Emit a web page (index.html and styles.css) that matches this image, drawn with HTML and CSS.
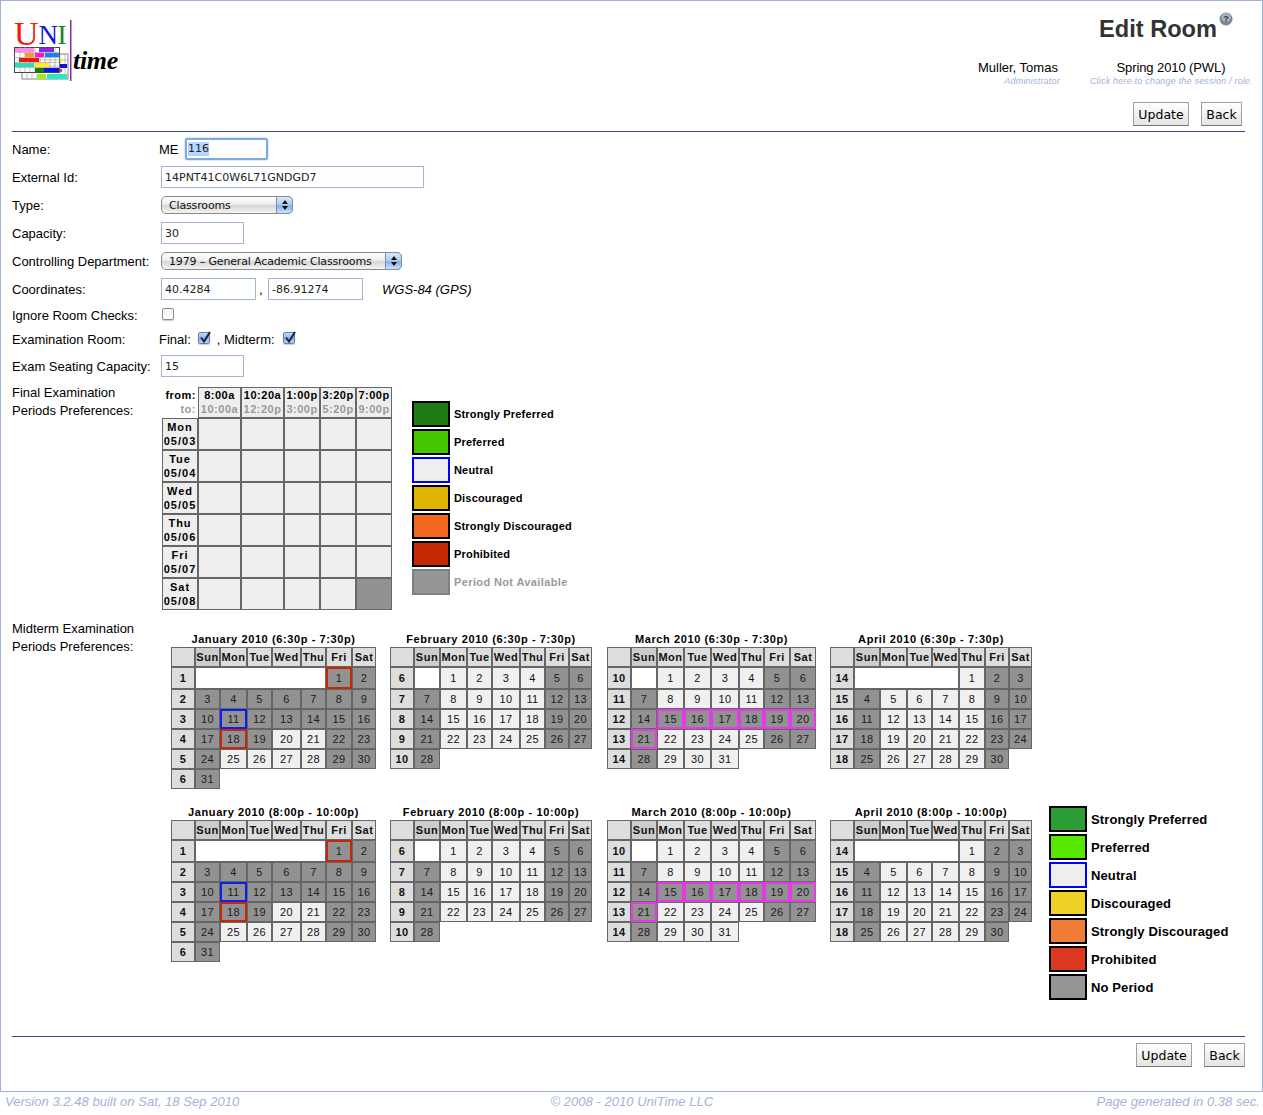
FILE: index.html
```html
<!DOCTYPE html>
<html lang="en">
<head>
<meta charset="utf-8">
<title>Edit Room</title>
<link rel="stylesheet" href="styles.css">
</head>
<body>
<div class="frame">
  <header class="header">
    <svg class="logo" width="110" height="74" viewBox="0 0 110 74" aria-label="UniTime logo">
      <g transform="translate(-14 -9)">
        <text class="logo-u" x="14" y="45" fill="#f01810">U</text>
        <text class="logo-u logo-n" x="38.5" y="44" fill="#1414e6">N</text>
        <text class="logo-u logo-n" x="57.5" y="44" fill="#20802a">I</text>
        <rect x="70" y="20" width="1.5" height="61" fill="#8a2aa8"/>
        <rect x="22" y="54" width="46" height="25" fill="#fff" stroke="#666" stroke-width=".8"/>
        <rect x="14.5" y="47.5" width="45" height="25" fill="#fff" stroke="#444"/>
        <path d="M14 52.5h46M14 57.5h46M14 62.5h46M14 67.5h46M20 47v25M25 47v25M30 47v25M35 47v25M40 47v25M45 47v25M50 47v25M55 47v25M60 54v25M65 54v25M27 72v7M32 72v7M37 72v7M22 60h46M22 66h46" stroke="#999" stroke-width=".6" fill="none"/>
        <rect x="15" y="48" width="19" height="4" fill="#ff8ae8"/>
        <rect x="39" y="48" width="15" height="4" fill="#8a28e0"/>
        <rect x="25" y="53" width="9" height="4" fill="#ff9428"/>
        <rect x="35" y="53" width="9" height="4" fill="#f018d8"/>
        <rect x="45" y="53" width="14" height="4" fill="#1088f0"/>
        <rect x="19" y="58" width="20" height="4" fill="#f01808"/>
        <rect x="15" y="63" width="19" height="4" fill="#28e0b8"/>
        <rect x="35" y="63" width="14" height="4" fill="#ffee10"/>
        <rect x="60" y="59" width="2" height="4" fill="#ffee10"/>
        <rect x="35" y="68" width="9" height="4" fill="#108010"/>
        <rect x="44" y="68" width="15" height="4" fill="#1010e0"/>
        <rect x="60" y="64" width="7" height="4" fill="#1010e0"/>
        <rect x="60" y="69" width="2" height="3" fill="#f018d8"/>
        <rect x="37" y="74" width="9" height="5" fill="#98f020"/>
        <rect x="47" y="74" width="20" height="5" fill="#28e8c0"/>
        <text class="logo-time" x="73" y="69">time</text>
      </g>
    </svg>
    <div class="header-right">
      <div class="title-row">
        <h1 class="title">Edit Room</h1>
        <svg class="help" width="14" height="14" viewBox="0 0 14 14" aria-label="Help">
          <circle cx="7" cy="7" r="6.5" fill="#7b8794"/>
          <circle cx="7" cy="5.5" r="4.6" fill="#aab3bd"/>
          <text class="help-q" x="7" y="10" text-anchor="middle">?</text>
        </svg>
      </div>
      <div class="user-row">
        <div class="user">
          <div class="user-name">Muller, Tomas</div>
          <div class="hint">Administrator</div>
        </div>
        <div class="session">
          <div class="user-name">Spring 2010 (PWL)</div>
          <div class="hint">Click here to change the session / role.</div>
        </div>
      </div>
    </div>
  </header>

  <main class="content">
    <div class="actions actions-top">
      <button class="btn" type="button">Update</button>
      <button class="btn" type="button">Back</button>
    </div>
    <div class="rule"></div>

    <div class="form">
      <div class="row">
        <label class="lbl">Name:</label>
        <div class="val">
          <span class="prefix">ME</span>
          <span class="focus-input"><span class="selected">116</span></span>
        </div>
      </div>
      <div class="row">
        <label class="lbl">External Id:</label>
        <div class="val val-in"><input class="input input-xl" type="text" value="14PNT41C0W6L71GNDGD7"></div>
      </div>
      <div class="row">
        <label class="lbl">Type:</label>
        <div class="val val-in">
          <span class="select select-type">Classrooms
            <span class="arrows"><svg width="8" height="12" viewBox="0 0 8 12"><path d="M4 1 7 5H1zM4 11 1 7h6z" fill="#111"/></svg></span>
          </span>
        </div>
      </div>
      <div class="row">
        <label class="lbl">Capacity:</label>
        <div class="val val-in"><input class="input input-sm" type="text" value="30"></div>
      </div>
      <div class="row">
        <label class="lbl">Controlling Department:</label>
        <div class="val val-in">
          <span class="select select-dept">1979 – General Academic Classrooms
            <span class="arrows"><svg width="8" height="12" viewBox="0 0 8 12"><path d="M4 1 7 5H1zM4 11 1 7h6z" fill="#111"/></svg></span>
          </span>
        </div>
      </div>
      <div class="row">
        <label class="lbl">Coordinates:</label>
        <div class="val val-in">
          <input class="input input-md" type="text" value="40.4284">
          <span class="comma">,</span>
          <input class="input input-md" type="text" value="-86.91274">
          <span class="wgs">WGS-84 (GPS)</span>
        </div>
      </div>
      <div class="row row-ignore">
        <label class="lbl">Ignore Room Checks:</label>
        <div class="val val-in"><span class="check check-off"></span></div>
      </div>
      <div class="row row-exam">
        <label class="lbl">Examination Room:</label>
        <div class="val">
          <span>Final:</span>
          <span class="check check-on"><svg width="14" height="14" viewBox="0 0 14 14"><path d="M3 6.5 6 10.5 12 1" fill="none" stroke="#12264a" stroke-width="2"/></svg></span>
          <span class="midterm-word">, Midterm:</span>
          <span class="check check-on"><svg width="14" height="14" viewBox="0 0 14 14"><path d="M3 6.5 6 10.5 12 1" fill="none" stroke="#12264a" stroke-width="2"/></svg></span>
        </div>
      </div>
      <div class="row row-seat">
        <label class="lbl">Exam Seating Capacity:</label>
        <div class="val val-in"><input class="input input-sm" type="text" value="15"></div>
      </div>
    </div>

    <section class="final">
      <div class="lbl lbl-block">Final Examination<br>Periods Preferences:</div>
      <table class="exam">
        <colgroup><col class="c-corner"><col class="c-w43"><col class="c-w43"><col class="c-w36"><col class="c-w36"><col class="c-w36"></colgroup>
        <thead>
          <tr>
            <th class="corner">from:<br><span class="to">to:</span></th>
            <th>8:00a<br><span class="to">10:00a</span></th>
            <th>10:20a<br><span class="to">12:20p</span></th>
            <th>1:00p<br><span class="to">3:00p</span></th>
            <th>3:20p<br><span class="to">5:20p</span></th>
            <th>7:00p<br><span class="to">9:00p</span></th>
          </tr>
        </thead>
        <tbody>
          <tr><th>Mon<br>05/03</th><td></td><td></td><td></td><td></td><td></td></tr>
          <tr><th>Tue<br>05/04</th><td></td><td></td><td></td><td></td><td></td></tr>
          <tr><th>Wed<br>05/05</th><td></td><td></td><td></td><td></td><td></td></tr>
          <tr><th>Thu<br>05/06</th><td></td><td></td><td></td><td></td><td></td></tr>
          <tr><th>Fri<br>05/07</th><td></td><td></td><td></td><td></td><td></td></tr>
          <tr><th>Sat<br>05/08</th><td></td><td></td><td></td><td></td><td class="na"></td></tr>
        </tbody>
      </table>
      <ul class="legend legend-final">
        <li><span class="sw sf1"></span>Strongly Preferred</li>
        <li><span class="sw sf2"></span>Preferred</li>
        <li><span class="sw neutral"></span>Neutral</li>
        <li><span class="sw sf4"></span>Discouraged</li>
        <li><span class="sw sf5"></span>Strongly Discouraged</li>
        <li><span class="sw sf6"></span>Prohibited</li>
        <li class="muted"><span class="sw sf7"></span>Period Not Available</li>
      </ul>
    </section>

    <section class="midterm">
      <div class="lbl lbl-block">Midterm Examination<br>Periods Preferences:</div>
      <div class="cal-blocks">
        <div class="cal-row" data-time="6:30p - 7:30p"></div>
        <div class="cal-row cal-row-2" data-time="8:00p - 10:00p">
          <ul class="legend legend-mid">
            <li><span class="sw sm1"></span>Strongly Preferred</li>
            <li><span class="sw sm2"></span>Preferred</li>
            <li><span class="sw neutral"></span>Neutral</li>
            <li><span class="sw sm4"></span>Discouraged</li>
            <li><span class="sw sm5"></span>Strongly Discouraged</li>
            <li><span class="sw sm6"></span>Prohibited</li>
            <li><span class="sw sm7"></span>No Period</li>
          </ul>
        </div>
      </div>
    </section>

    <div class="rule rule-bottom"></div>
    <div class="actions actions-bottom">
      <button class="btn" type="button">Update</button>
      <button class="btn" type="button">Back</button>
    </div>
  </main>
</div>
<footer class="footer">
  <span>Version 3.2.48 built on Sat, 18 Sep 2010</span>
  <span class="foot-mid">© 2008 - 2010 UniTime LLC</span>
  <span>Page generated in 0.38 sec.</span>
</footer>
<script src="calendar.js"></script>
</body>
</html>
```
FILE: styles.css
```css
* { box-sizing: border-box; }
html, body { margin: 0; padding: 0; }
body { font-family: "Liberation Sans", Arial, sans-serif; font-size: 13px; color: #000; background: #fff; }

.frame { width: 1263px; height: 1092px; border: 1px solid #9fb2d6; position: relative; }

/* header */
.header { display: flex; justify-content: space-between; height: 100px; padding: 8px 9px 0 13px; }
.logo { display: block; }
.logo-u { font-family: "Liberation Serif", serif; font-size: 34px; }
.logo-n { font-size: 27px; }
.logo-time { font-family: "Liberation Serif", serif; font-weight: bold; font-style: italic; font-size: 26px; letter-spacing: -.3px; }
.header-right { display: flex; flex-direction: column; align-items: flex-end; margin-top: 4px; }
.title-row { display: flex; align-items: flex-start; padding-right: 20px; height: 42px; }
.title { margin: 0; font-size: 23.6px; line-height: 30px; padding-top: 1px; font-weight: bold; color: #333; }
.help { margin: -1px 0 0 2px; }
.help-q { font: bold 9px "Liberation Sans", sans-serif; fill: #2d3a48; }
.user-row { display: flex; gap: 30px; margin-top: 5px; }
.user { text-align: right; }
.session { text-align: center; }
.user-name { font-size: 13px; line-height: 16px; }
.user .user-name { padding-right: 2px; }
.session .user-name { letter-spacing: -.1px; padding-right: 1px; }
.hint { font-size: 9px; line-height: 11px; font-style: italic; color: #9fb2d6; letter-spacing: .2px; }

/* content */
.content { padding: 0 17px 0 11px; }
.actions { display: flex; justify-content: flex-end; gap: 12px; }
.actions-top { padding: 1px 3px 0 0; height: 30px; }
.btn { font-family: "DejaVu Sans", sans-serif; font-size: 12.5px; height: 24px; padding: 0; border: 1px solid #a0a0a0; border-bottom-color: #777; background: linear-gradient(#fff, #e4e4e4); color: #000; width: 56px; border-radius: 0; }
.btn + .btn { width: 41px; }
.rule { height: 1px; background: #35506e; }

/* form */
.form { display: flex; flex-direction: column; padding-top: 3px; }
.row { display: flex; align-items: center; height: 28px; }
.row-ignore { height: 24px; }
.row-exam { height: 24px; }
.row-seat { height: 30px; }
.lbl { width: 147px; flex: none; font-size: 13px; line-height: 18px; }
.row .lbl { padding-top: 1px; }
.val { display: flex; align-items: center; font-size: 13px; }
.val-in { padding-left: 2px; }
.prefix { font-size: 13px; width: 26px; }
.input { height: 22px; border: 1px solid #a2b6d3; padding: 0 3px; font-family: "DejaVu Sans", sans-serif; font-size: 11px; color: #222; background: #fff; outline: none; }
.input-xl { width: 263px; }
.input-sm { width: 83px; }
.input-md { width: 95px; }
.focus-input { display: flex; align-items: center; width: 83px; height: 22px; padding: 0 1px; border: 2px solid #7fa8dc; border-radius: 2px; box-shadow: 0 0 2px #8ab4e8; font-family: "DejaVu Sans", sans-serif; font-size: 11px; color: #222; }
.selected { background: #b5d5ff; line-height: 14px; }
.select { position: relative; display: flex; align-items: center; height: 18px; padding-left: 7px; font-family: "DejaVu Sans", sans-serif; font-size: 11px; letter-spacing: -.15px; color: #111; border: 1px solid #8a8a8a; border-radius: 5px; background: linear-gradient(#fff, #eee 45%, #d6d6d6 55%, #f4f4f4); }
.select-type { width: 132px; }
.select-dept { width: 241px; }
.arrows { position: absolute; right: -1px; top: -1px; bottom: -1px; width: 17px; display: flex; align-items: center; justify-content: center; border-radius: 0 5px 5px 0; border: 1px solid #7f8ea4; background: linear-gradient(#dce9f8, #a9c9ee 50%, #7fb0ea 55%, #cfe2f8); }
.comma { width: 12px; text-align: left; padding-left: 3px; }
.wgs { font-style: italic; margin-left: 19px; }
.check { display: block; position: relative; width: 12px; height: 12px; border: 1px solid #8c8c8c; border-radius: 2px; background: linear-gradient(#f4f4f4, #fff); box-shadow: 0 1px 1px #ccc; margin-bottom: 2px; }
.check-off { margin-left: 1px; }
.check-on { background: linear-gradient(#c4d8f2, #8cb2e4 55%, #bcd6f4); border-color: #6b7f9e; margin-left: 7px; margin-bottom: 2px; }
.check-on svg { position: absolute; left: -1px; top: -2px; }
.midterm-word { margin-left: 7px; }
.midterm-word + .check-on { margin-left: 8px; }

/* final exam */
.final { display: flex; align-items: flex-start; margin-top: 6px; position: relative; }
.final > .lbl { width: 150px; margin-top: -3px; }
.exam { border-collapse: separate; border-spacing: 0; table-layout: fixed; width: 230px; font-size: 11px; letter-spacing: .6px; }
.c-corner { width: 36px; }
.c-w43 { width: 43px; }
.c-w36 { width: 36px; }
.exam th, .exam td { border: 1px solid #666; padding: 0; text-align: center; font-weight: bold; background: #eee; line-height: 14px; }
.exam thead th { height: 31px; vertical-align: top; letter-spacing: .5px; }
.exam tbody th { height: 32px; line-height: 14px; letter-spacing: 1px; }
.exam .corner { border: 0; background: #fff; text-align: right; padding: 1px 2px 0 0; }
.exam .to { color: #999; }
.exam td.na { background: #929292; }
.legend { list-style: none; margin: 0; padding: 0; font-weight: bold; }
.legend li { display: flex; align-items: center; height: 28px; }
.sw { display: block; width: 38px; height: 26px; margin-right: 4px; border: 2px solid #000; flex: none; }
.legend-final { margin: 13px 0 0 20px; font-size: 11px; letter-spacing: .18px; }
.muted { color: #999; letter-spacing: .38px; }
.neutral { background: #eee; border-color: #00f; }
.sf1 { background: #1f7c13; }
.sf2 { background: #45c700; }
.sf4 { background: #dfb400; }
.sf5 { background: #f0681d; }
.sf6 { background: #c42805; }
.sf7 { background: #959595; border-color: #808080; }
.sm1 { background: #2c9c35; }
.sm2 { background: #57e800; }
.sm4 { background: #f0d128; }
.sm5 { background: #f07c36; }
.sm6 { background: #da3820; }
.sm7 { background: #959595; }

/* midterm */
.midterm { display: flex; align-items: flex-start; margin-top: 8px; }
.midterm > .lbl { width: 159px; flex: none; margin-top: 2px; }
.cal-blocks { display: flex; flex-direction: column; }
.cal-row { display: flex; align-items: flex-start; gap: 14px; height: 187px; padding-top: 14px; }
.cal-row-2 { padding-top: 0; height: 170px; }
.cal-title { text-align: center; font-size: 11px; font-weight: bold; line-height: 15px; letter-spacing: .6px; white-space: nowrap; }
.cal-mar { margin-left: 1px; }
.cal { border-collapse: separate; border-spacing: 0; table-layout: fixed; font-size: 11px; letter-spacing: .3px; color: #111; }
.cal th, .cal td { border: 1px solid #666; padding: 0; text-align: center; height: 20px; }
.cal thead th { background: #ddd; font-weight: bold; letter-spacing: .5px; }
.cal thead th.sun { background: #ccc; }
.cal tbody th { background: #ddd; font-weight: bold; }
.cal tbody tr:first-child th, .cal tbody tr:first-child td { height: 22px; }
.cal td.light { background: #f0f0f0; }
.cal td.gray { background: #929292; color: #1c1c1c; }
.cal td.white { background: #fff; }
.cal td.none { border: 0; background: transparent; }
.cal td.red { border-color: #c42805; box-shadow: inset 0 0 0 1px #c42805; }
.cal td.blue { border-color: #0a1ef0; box-shadow: inset 0 0 0 1px #0a1ef0; }
.cal td.mag { border-color: #e53be5; box-shadow: inset 0 0 0 1px #e53be5; }
.legend-mid { margin: 0 0 0 3px; font-size: 13px; letter-spacing: .12px; }

.rule-bottom { position: absolute; left: 11px; right: 17px; top: 1035px; }
.actions-bottom { position: absolute; right: 17px; top: 1042px; margin: 0; }

/* footer */
.footer { display: flex; justify-content: space-between; padding: 2px 3px 0 5px; font-size: 13px; font-style: italic; color: #a4b3d6; line-height: 16px; letter-spacing: .03px; }
.foot-mid { margin-right: 72px; }
```
FILE: calendar.js
```js
(function () {
  var DAYS = ['Sun', 'Mon', 'Tue', 'Wed', 'Thu', 'Fri', 'Sat'];
  function range(a, b) { var r = []; for (var i = a; i <= b; i++) r.push(i); return r; }
  var MONTHS = [
    { name: 'January', week: 1, offset: 5, days: 31, cols: [24, 25, 27, 25, 29, 25, 26, 24],
      light: [20, 21, 25, 26, 27, 28], red: [1, 18], blue: [11], mag: [] },
    { name: 'February', week: 6, offset: 1, days: 28, cols: [24, 26, 27, 25, 28, 25, 24, 23],
      light: [].concat(range(1, 4), range(8, 11), range(15, 18), range(22, 25)), red: [], blue: [], mag: [] },
    { name: 'March', week: 10, offset: 1, days: 31, cols: [24, 26, 27, 27, 28, 25, 26, 26], cls: 'cal-mar',
      light: [].concat(range(1, 4), range(8, 11), range(22, 25), range(29, 31)), red: [], blue: [], mag: range(15, 21) },
    { name: 'April', week: 14, offset: 4, days: 30, cols: [24, 26, 27, 25, 27, 26, 24, 23],
      light: [].concat([1], range(5, 8), range(12, 15), range(19, 22), range(26, 29)), red: [], blue: [], mag: [] }
  ];

  function el(tag, cls, text) {
    var n = document.createElement(tag);
    if (cls) n.className = cls;
    if (text !== undefined) n.textContent = text;
    return n;
  }

  function build(m, time) {
    var wrap = el('div', m.cls || '');
    var total = m.cols.reduce(function (a, b) { return a + b; }, 0);
    wrap.style.width = total + 'px';
    wrap.appendChild(el('div', 'cal-title', m.name + ' 2010 (' + time + ')'));
    var t = el('table', 'cal');
    t.style.width = total + 'px';
    var cg = el('colgroup');
    m.cols.forEach(function (w) { var c = el('col'); c.style.width = w + 'px'; cg.appendChild(c); });
    t.appendChild(cg);
    var thead = el('thead'), hr = el('tr');
    hr.appendChild(el('th'));
    DAYS.forEach(function (d, i) { hr.appendChild(el('th', i === 0 ? 'sun' : '', d)); });
    thead.appendChild(hr);
    t.appendChild(thead);
    var tb = el('tbody'), day = 1, week = m.week;
    while (day <= m.days) {
      var tr = el('tr');
      tr.appendChild(el('th', '', String(week++)));
      var slot = 0;
      if (day === 1 && m.offset) {
        var blank = el('td', 'white');
        blank.colSpan = m.offset;
        tr.appendChild(blank);
        slot = m.offset;
      }
      for (; slot < 7; slot++) {
        if (day > m.days) {
          tr.appendChild(el('td', 'none'));
          continue;
        }
        var cls = m.light.indexOf(day) >= 0 ? 'light' : 'gray';
        if (m.red.indexOf(day) >= 0) cls += ' red';
        if (m.blue.indexOf(day) >= 0) cls += ' blue';
        if (m.mag.indexOf(day) >= 0) cls += ' mag';
        tr.appendChild(el('td', cls, String(day++)));
      }
      tb.appendChild(tr);
    }
    t.appendChild(tb);
    wrap.appendChild(t);
    return wrap;
  }

  document.querySelectorAll('.cal-row').forEach(function (row) {
    var first = row.firstElementChild;
    MONTHS.forEach(function (m) { row.insertBefore(build(m, row.dataset.time), first); });
  });
})();
```
